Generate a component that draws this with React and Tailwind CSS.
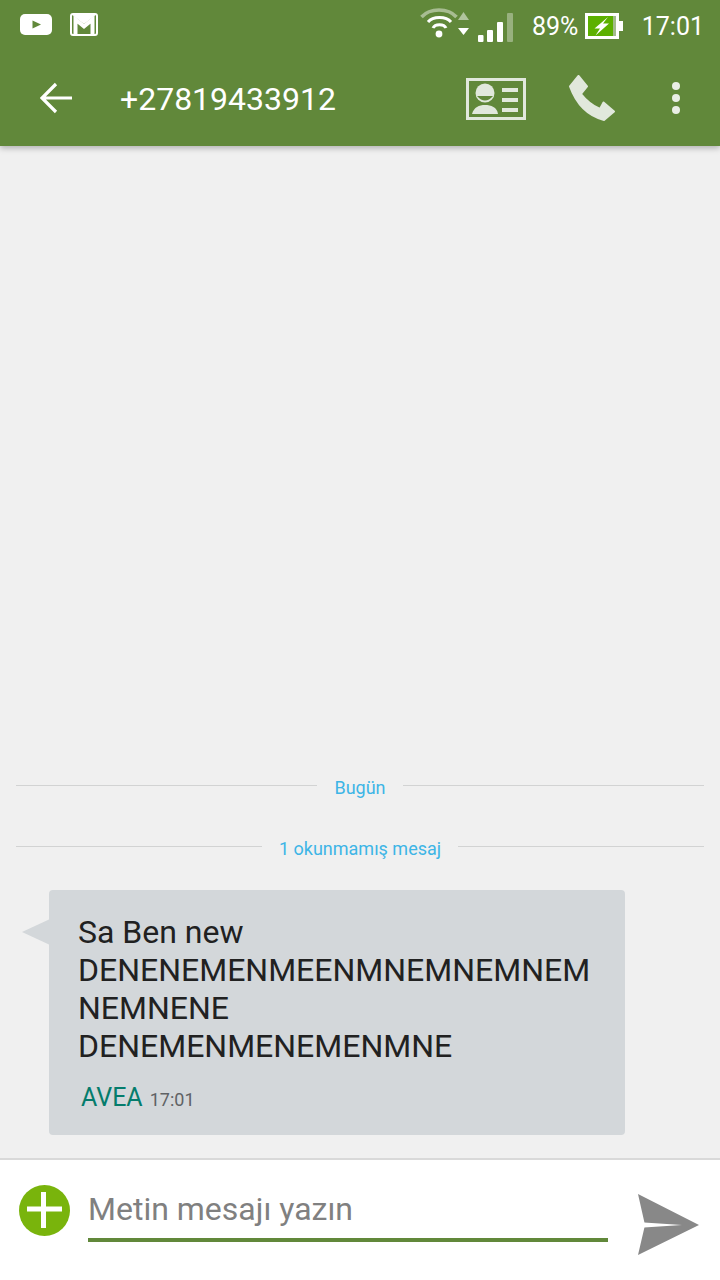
export default function App() {
  const Divider = ({ label, mt }) => (
    <div className={`flex items-center gap-[17px] mx-4 ${mt}`}>
      <div className="flex-1 h-px bg-[#d2d3d3] -translate-y-[3px]" />
      <span className="text-[18px] leading-[24px] text-[#3db5e6]">{label}</span>
      <div className="flex-1 h-px bg-[#d2d3d3] -translate-y-[3px]" />
    </div>
  );

  return (
    <div className="w-[720px] h-[1280px] flex flex-col bg-[#f0f0f0] overflow-hidden font-[family-name:Roboto,sans-serif]">
      <header className="relative z-10 h-[146px] shrink-0 bg-[#61883a] shadow-[0_2px_6px_rgba(0,0,0,0.28)]">
        <div className="h-12 flex items-center pl-5 pr-4 text-white">
          <svg width="32" height="21" viewBox="0 0 32 21" className="shrink-0">
            <rect x="0" y="0" width="32" height="21" rx="5" fill="#fff" />
            <path d="M12.5 6.5 L21 10.5 L12.5 14.5 Z" fill="#61883a" />
          </svg>
          <svg width="28" height="23" viewBox="0 0 28 23" className="ml-[18px] shrink-0">
            <rect x="1" y="1" width="26" height="21" rx="2" fill="#61883a" stroke="#fff" strokeWidth="2" />
            <path d="M1 1 H27 L14 11 Z" fill="#fff" />
            <path d="M5.5 21 V6.5 L14 13.5 L22.5 6.5 V21" fill="none" stroke="#fff" strokeWidth="4" />
          </svg>
          <svg width="94" height="36" viewBox="0 0 94 36" className="ml-[322px] shrink-0" fill="none">
            <path d="M1.5 11 C10 1.7 28 1.7 36.5 11" stroke="#fff" strokeOpacity="0.45" strokeWidth="3.5" />
            <path d="M8 16 C13 10 26 10 31 16" stroke="#fff" strokeWidth="3" />
            <path d="M13 22 C15 17.5 24 17.5 26 22" stroke="#fff" strokeWidth="3" />
            <circle cx="19" cy="28" r="3.4" fill="#fff" />
            <path d="M38 14 L43.5 6 L49 14 Z" fill="#fff" fillOpacity="0.5" />
            <path d="M38 22 L49 22 L43.5 29 Z" fill="#fff" />
            <rect x="58" y="29" width="5.5" height="7" rx="1" fill="#fff" />
            <rect x="67" y="24" width="6" height="12" rx="1" fill="#fff" />
            <rect x="77" y="16" width="6" height="20" rx="1" fill="#fff" />
            <rect x="87" y="7" width="6" height="29" rx="1" fill="#fff" fillOpacity="0.35" />
          </svg>
          <span className="ml-[18px] w-[47px] mt-[4px] text-[25px] leading-none">89%</span>
          <svg width="38" height="26" viewBox="0 0 38 26" className="ml-[6px] mt-[4px] shrink-0">
            <rect x="1.5" y="1.5" width="31" height="23" fill="none" stroke="#fff" strokeWidth="3" />
            <rect x="3" y="3" width="25" height="20" fill="#5cb000" />
            <rect x="28" y="3" width="3" height="20" fill="#a3bb8c" />
            <rect x="34" y="8" width="4" height="10" fill="#fff" />
            <path d="M23 4 L9.5 15.5 H15 L10.5 22.5 L24 10.5 H18 Z" fill="#fff" />
          </svg>
          <span className="ml-[19px] mt-[4px] text-[25px] leading-none">17:01</span>
        </div>
        <div className="h-[98px] flex items-center pl-10 text-white">
          <svg width="32" height="32" viewBox="0 0 32 32" fill="none" stroke="#fff" strokeWidth="3.2" className="mt-[2px] shrink-0">
            <path d="M32 16 H3 M16 2 L2 16 L16 30" />
          </svg>
          <span className="ml-[48px] w-[215px] text-[32px] leading-none mt-[4px] whitespace-nowrap">+27819433912</span>
          <svg width="60" height="42" viewBox="0 0 60 42" className="ml-[131px] mt-[3px] shrink-0">
            <rect x="1.5" y="1.5" width="57" height="39" fill="none" stroke="#e1e8dc" strokeWidth="3" />
            <circle cx="19" cy="15" r="9.5" fill="#e1e8dc" />
            <path d="M11 18 H27 Q19 27 11 18 Z" fill="#61883a" />
            <path d="M6 36 C8 29 13 27 19 27 C25 27 31 29 32 36 Z" fill="#e1e8dc" />
            <rect x="36" y="10" width="16" height="4" fill="#e1e8dc" />
            <rect x="36" y="20" width="16" height="4" fill="#e1e8dc" />
            <rect x="36" y="30" width="16" height="4" fill="#e1e8dc" />
          </svg>
          <svg width="46" height="46" viewBox="0 0 46 46" className="ml-[43px] mt-[2px] shrink-0">
            <path d="M1 11.5 L9.5 1 L18 11.5 L12 19 Q20 29 31 34 L34.5 27.5 L45 36.5 L35 45 Q11 39 1 11.5 Z" fill="#e1e8dc" stroke="#e1e8dc" strokeWidth="2" strokeLinejoin="round" />
          </svg>
          <svg width="8" height="32" viewBox="0 0 8 32" className="ml-[57px] mt-[2px] shrink-0">
            <circle cx="4" cy="4" r="4" fill="#e9eee5" />
            <circle cx="4" cy="16" r="4" fill="#e9eee5" />
            <circle cx="4" cy="28" r="4" fill="#e9eee5" />
          </svg>
        </div>
      </header>

      <main className="flex-1 flex flex-col justify-end pb-[23px]">
        <Divider label="Bugün" />
        <Divider label="1 okunmamış mesaj" mt="mt-[37px]" />
        <div className="relative ml-[49px] mt-[29px] w-[576px] h-[245px] rounded-[4px] bg-[#d3d7da] pt-[23px] pl-[29px]">
          <svg width="28" height="26" viewBox="0 0 28 26" className="absolute left-[-27px] top-[29px]">
            <path d="M0 13 L28 0 V26 Z" fill="#d3d7da" />
          </svg>
          <p className="text-[32px] leading-[38px] text-[#212121] whitespace-nowrap">
            Sa Ben new<br />DENENEMENMEENMNEMNEMNEM<br />NEMNENE<br />DENEMENMENEMENMNE
          </p>
          <div className="flex items-baseline mt-[17px] ml-[3px]">
            <span className="text-[25px] leading-[32px] text-[#047c6c]">AVEA</span>
            <span className="ml-[7px] text-[18px] leading-[32px] text-[#5f6265]">17:01</span>
          </div>
        </div>
      </main>

      <footer className="h-[122px] shrink-0 bg-white border-t-2 border-[#d9d9d9] flex items-start pl-[19px] pt-[25px]">
        <svg width="51" height="51" viewBox="0 0 51 51" className="shrink-0">
          <circle cx="25.5" cy="25.5" r="25.5" fill="#79b40c" />
          <rect x="8" y="21.5" width="35" height="5" fill="#fff" />
          <rect x="22" y="7" width="5" height="36" fill="#fff" />
        </svg>
        <div className="ml-[18px] w-[520px] h-[57px] border-b-4 border-[#61883a]">
          <span className="text-[32px] leading-[48px] text-[#808080]">Metin mesajı yazın</span>
        </div>
        <svg width="62" height="61" viewBox="0 0 62 61" className="ml-[30px] mt-[9px] shrink-0">
          <path d="M0 0 L61 31 L0 61 L7 31 Z" fill="#888888" />
          <path d="M6 28.5 L44 31 L6 33.5 Z" fill="#fff" />
        </svg>
      </footer>
    </div>
  );
}
